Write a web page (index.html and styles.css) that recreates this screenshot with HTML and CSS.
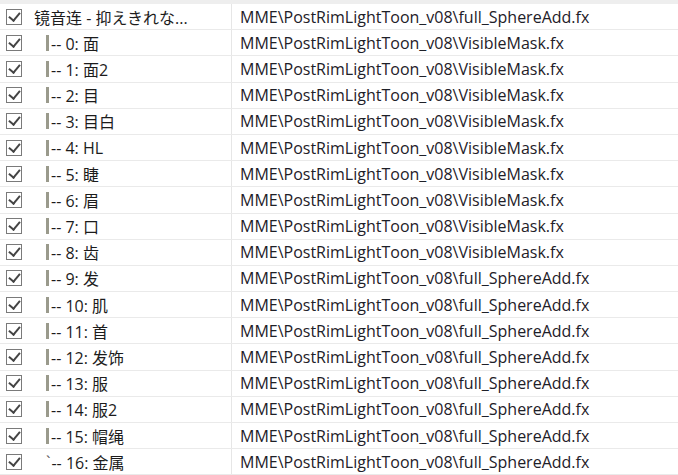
FILE: index.html
```html
<!DOCTYPE html>
<html>
<head>
<meta charset="utf-8">
<link rel="stylesheet" href="styles.css">
</head>
<body>
<div class="list">
  <div class="row"><div class="c1"><span class="cb"></span><span class="name">镜音连 - 抑えきれな...</span></div><div class="c2">MME\PostRimLightToon_v08\full_SphereAdd.fx</div></div>
  <div class="row"><div class="c1"><span class="cb"></span><span class="tree"><span class="bar"></span>-- 0: 面</span></div><div class="c2">MME\PostRimLightToon_v08\VisibleMask.fx</div></div>
  <div class="row"><div class="c1"><span class="cb"></span><span class="tree"><span class="bar"></span>-- 1: 面2</span></div><div class="c2">MME\PostRimLightToon_v08\VisibleMask.fx</div></div>
  <div class="row"><div class="c1"><span class="cb"></span><span class="tree"><span class="bar"></span>-- 2: 目</span></div><div class="c2">MME\PostRimLightToon_v08\VisibleMask.fx</div></div>
  <div class="row"><div class="c1"><span class="cb"></span><span class="tree"><span class="bar"></span>-- 3: 目白</span></div><div class="c2">MME\PostRimLightToon_v08\VisibleMask.fx</div></div>
  <div class="row"><div class="c1"><span class="cb"></span><span class="tree"><span class="bar"></span>-- 4: HL</span></div><div class="c2">MME\PostRimLightToon_v08\VisibleMask.fx</div></div>
  <div class="row"><div class="c1"><span class="cb"></span><span class="tree"><span class="bar"></span>-- 5: 睫</span></div><div class="c2">MME\PostRimLightToon_v08\VisibleMask.fx</div></div>
  <div class="row"><div class="c1"><span class="cb"></span><span class="tree"><span class="bar"></span>-- 6: 眉</span></div><div class="c2">MME\PostRimLightToon_v08\VisibleMask.fx</div></div>
  <div class="row"><div class="c1"><span class="cb"></span><span class="tree"><span class="bar"></span>-- 7: 口</span></div><div class="c2">MME\PostRimLightToon_v08\VisibleMask.fx</div></div>
  <div class="row"><div class="c1"><span class="cb"></span><span class="tree"><span class="bar"></span>-- 8: 齿</span></div><div class="c2">MME\PostRimLightToon_v08\VisibleMask.fx</div></div>
  <div class="row"><div class="c1"><span class="cb"></span><span class="tree"><span class="bar"></span>-- 9: 发</span></div><div class="c2">MME\PostRimLightToon_v08\full_SphereAdd.fx</div></div>
  <div class="row"><div class="c1"><span class="cb"></span><span class="tree"><span class="bar"></span>-- 10: 肌</span></div><div class="c2">MME\PostRimLightToon_v08\full_SphereAdd.fx</div></div>
  <div class="row"><div class="c1"><span class="cb"></span><span class="tree"><span class="bar"></span>-- 11: 首</span></div><div class="c2">MME\PostRimLightToon_v08\full_SphereAdd.fx</div></div>
  <div class="row"><div class="c1"><span class="cb"></span><span class="tree"><span class="bar"></span>-- 12: 发饰</span></div><div class="c2">MME\PostRimLightToon_v08\full_SphereAdd.fx</div></div>
  <div class="row"><div class="c1"><span class="cb"></span><span class="tree"><span class="bar"></span>-- 13: 服</span></div><div class="c2">MME\PostRimLightToon_v08\full_SphereAdd.fx</div></div>
  <div class="row"><div class="c1"><span class="cb"></span><span class="tree"><span class="bar"></span>-- 14: 服2</span></div><div class="c2">MME\PostRimLightToon_v08\full_SphereAdd.fx</div></div>
  <div class="row"><div class="c1"><span class="cb"></span><span class="tree"><span class="bar"></span>-- 15: 帽绳</span></div><div class="c2">MME\PostRimLightToon_v08\full_SphereAdd.fx</div></div>
  <div class="row"><div class="c1"><span class="cb"></span><span class="tree"><span class="tick">`</span>-- 16: 金属</span></div><div class="c2">MME\PostRimLightToon_v08\full_SphereAdd.fx</div></div>
</div>
</body>
</html>
```
FILE: styles.css
```css
html, body {
  margin: 0;
  padding: 0;
  background: #ffffff;
  overflow: hidden;
}
body {
  width: 678px;
  height: 475px;
  font-family: "Open Sans", "Noto Sans CJK SC", sans-serif;
  font-size: 16px;
  color: #1c1c1c;
}
.list {
  border-top: 4px solid #eeeeee;
}
.row {
  display: flex;
  height: 26.2px;
  box-sizing: border-box;
  border-bottom: 1px solid #eaeaea;
  align-items: center;
}
.c1 {
  width: 232px;
  box-sizing: border-box;
  height: 100%;
  display: flex;
  align-items: center;
  border-right: 1px solid #e6e6e6;
  padding-left: 6px;
  white-space: nowrap;
  overflow: hidden;
}
.c2 {
  padding-left: 8px;
  white-space: nowrap;
  color: #1e2028;
}
.cb {
  width: 16px;
  height: 16px;
  box-sizing: border-box;
  border: 1px solid #7a7a7a;
  flex: none;
  position: relative;
  margin-right: 12px;
}
.cb::after {
  content: "";
  position: absolute;
  left: 4px;
  top: 0px;
  width: 5px;
  height: 9px;
  border-right: 2px solid #444444;
  border-bottom: 2px solid #444444;
  transform: rotate(40deg);
}
.tree {
  display: flex;
  align-items: center;
  padding-left: 12px;
}
.bar {
  display: inline-block;
  width: 3px;
  height: 16px;
  background: #9a9a8c;
  margin-right: 2px;
}
.tick {
  color: #555;
  margin-right: 1px;
}
```
